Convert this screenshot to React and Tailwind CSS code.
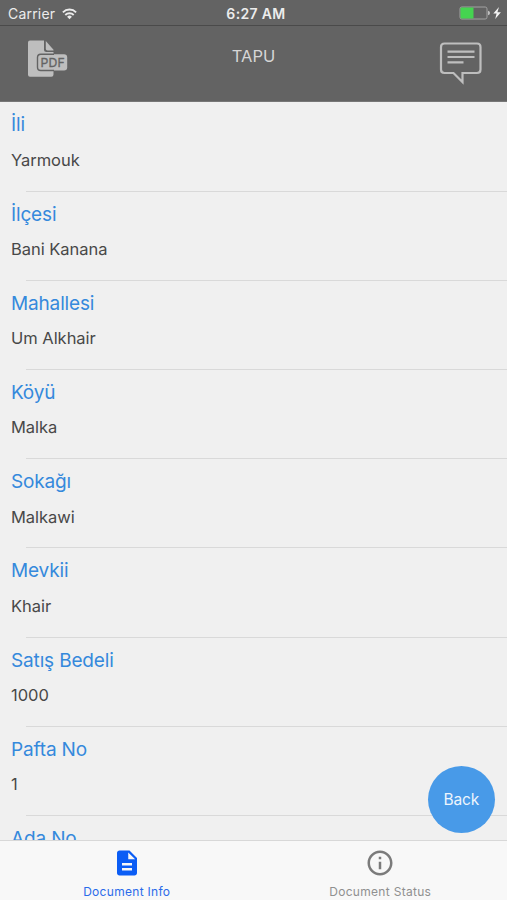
import React from "react";

const fields = [
  ["İli", "Yarmouk"],
  ["İlçesi", "Bani Kanana"],
  ["Mahallesi", "Um Alkhair"],
  ["Köyü", "Malka"],
  ["Sokağı", "Malkawi"],
  ["Mevkii", "Khair"],
  ["Satış Bedeli", "1000"],
  ["Pafta No", "1"],
  ["Ada No", ""],
];

function StatusBar() {
  return (
    <div className="grid h-[26px] shrink-0 grid-cols-3 items-center border-b border-[#4a4a4a] text-[#ececec]">
      <div className="flex items-center gap-[7px] pt-[2px] pl-[8px]">
        <span className="text-[14px] leading-4 tracking-[0.2px]">Carrier</span>
        <svg width="15" height="12" viewBox="0 0 15 12" fill="none" stroke="currentColor" strokeWidth="1.9">
          <path d="M0.9 4.3 A9.3 9.3 0 0 1 14.1 4.3" />
          <path d="M3.3 7 A6 6 0 0 1 11.7 7" />
          <path d="M5.1 8.7 A3.4 3.4 0 0 1 9.9 8.7 L7.5 11.2 Z" fill="currentColor" stroke="none" />
        </svg>
      </div>
      <div className="pt-[2px] pl-[5px] text-center text-[14px] leading-4 font-semibold tracking-[0.35px]">6:27 AM</div>
      <div className="flex justify-end pt-px pr-[5px]">
        <svg width="43" height="14" viewBox="0 0 43 14">
          <rect x="1" y="1" width="27" height="12" rx="1.8" fill="none" stroke="#a3a3a3" />
          <path d="M2.5 1.5H14.5V12.5H2.5Q1.5 12.5 1.5 11.5V2.5Q1.5 1.5 2.5 1.5Z" fill="#45d450" />
          <path d="M29 4.8Q31 5.2 31 7T29 9.2Z" fill="#c0c0c0" />
          <path d="M40 1L34.3 7.6H37.6L36.2 13L41.9 6.2H38.4Z" fill="#f4f4f4" />
        </svg>
      </div>
    </div>
  );
}

function PdfIcon() {
  return (
    <svg width="42" height="40" viewBox="0 0 42 40">
      <path d="M3 0.5H17V9.5Q17 12 19.5 12H26.5V34.5Q26.5 36.7 24.3 36.7H3Q1 36.7 1 34.7V2.5Q1 0.5 3 0.5Z" fill="#bebebe" />
      <path d="M18.8 1L26.5 9.8V10.5H20.5Q18.8 10.5 18.8 8.8Z" fill="#bebebe" />
      <rect x="10.5" y="14.2" width="29.7" height="16.3" rx="3.2" fill="#bebebe" />
      <path d="M27 14.2H13.7Q10.5 14.2 10.5 17.4V27.3Q10.5 30.5 13.7 30.5H27" fill="none" stroke="#636363" strokeWidth="1.4" />
      <text x="13.6" y="26.8" textLength="24" lengthAdjust="spacing" fill="#636363" stroke="#636363" strokeWidth="0.3" fontSize="12.2" fontWeight="400">PDF</text>
    </svg>
  );
}

function MessageIcon() {
  return (
    <svg width="44" height="44" viewBox="0 0 44 44" fill="none" stroke="#bebebe" strokeWidth="2.2">
      <path d="M5.5 2.5H38Q41.500 2.500 41.500 6V28.500Q41.500 32 38 32H23.500V41L14.500 32H5.500Q2 32 2 28.500V6Q2 2.500 5.500 2.500Z" />
      <path d="M8.500 10.700H35.500M8.500 16H35.500M8.500 21.300H24.500" />
    </svg>
  );
}

function Header() {
  return (
    <header className="flex h-[76px] shrink-0 items-start justify-between border-b border-[#777] pr-[24px] pl-[27px]">
      <button className="mt-[14px] block"><PdfIcon /></button>
      <h1 className="mt-[20px] pr-px text-[16.5px] leading-5 text-[#d6d6d6]">TAPU</h1>
      <button className="mt-[15px] block"><MessageIcon /></button>
    </header>
  );
}

function Field({ label, value }) {
  return (
    <div className="flex h-[89.2px] shrink-0 flex-col">
      <div className="flex-1 pt-[11px] pl-[11px]">
        <div className="text-[19px] leading-6 tracking-[-0.15px] text-[#3589dc]">{label}</div>
        {value && <div className="mt-[12.4px] text-[16.5px] leading-5 tracking-[-0.03px] text-[#484848]">{value}</div>}
      </div>
      <div className="ml-[26px] h-px bg-[#d9d9d9]" />
    </div>
  );
}

export default function App() {
  return (
    <div className="relative flex h-[900px] w-[507px] flex-col overflow-hidden bg-[#636363] font-['Inter','Liberation_Sans',sans-serif]">
      <StatusBar />
      <Header />
      <main className="flex min-h-0 flex-1 flex-col overflow-hidden bg-[#f0f0f0] pt-[0.4px]">
        {fields.map(([label, value]) => (
          <Field key={label} label={label} value={value} />
        ))}
      </main>
      <button className="absolute right-[12px] bottom-[67px] size-[67.5px] rounded-full bg-[#489ae8] text-[15.5px] tracking-[-0.15px] text-[#edf5fd]">Back</button>
      <nav className="grid h-[60px] shrink-0 grid-cols-2 border-t border-[#d8d8d8] bg-[#f8f8f8] text-[12px] leading-4 tracking-[0.3px]">
        <div className="flex flex-col items-center pt-[7px] text-[#2b6bea]">
          <svg width="30" height="30" viewBox="0 0 24 24" fill="#0b5df5">
            <path d="M14 2H6c-1.1 0-1.99.9-1.99 2L4 20c0 1.1.89 2 1.99 2H18c1.1 0 2-.9 2-2V8l-6-6zm2 16H8v-2h8v2zm0-4H8v-2h8v2zm-3-5V3.5L18.5 9H13z" />
          </svg>
          <span className="mt-[6px]">Document Info</span>
        </div>
        <div className="flex flex-col items-center pt-[7px] text-[#909090]">
          <svg width="30" height="30" viewBox="0 0 24 24" fill="#7b7b7b">
            <path d="M11 7h2v2h-2zm0 4h2v6h-2zm1-9C6.48 2 2 6.48 2 12s4.48 10 10 10 10-4.48 10-10S17.52 2 12 2zm0 18c-4.41 0-8-3.59-8-8s3.59-8 8-8 8 3.59 8 8-3.59 8-8 8z" />
          </svg>
          <span className="mt-[6px]">Document Status</span>
        </div>
      </nav>
    </div>
  );
}
